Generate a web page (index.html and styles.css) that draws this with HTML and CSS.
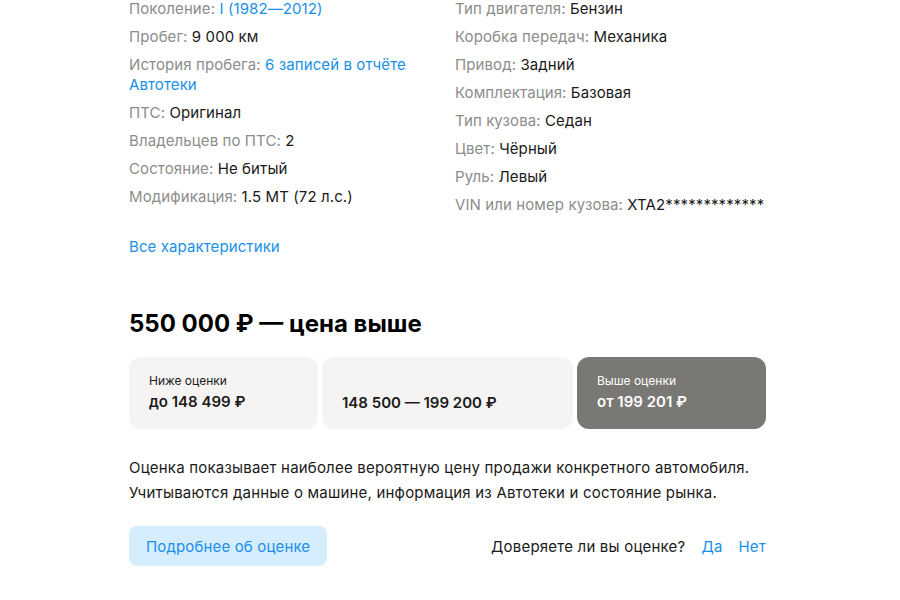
FILE: index.html
```html
<!DOCTYPE html>
<html lang="ru">
<head>
    <meta charset="UTF-8">
    <meta name="viewport" content="width=device-width, initial-scale=1.0">
    <title>Характеристики и оценка</title>
    <link rel="stylesheet" href="styles.css">
</head>
<body>
    <div class="container">
        <div class="params">
            <ul class="param-list">
                <li><span class="label">Поколение: </span><a class="link" href="#">I (1982—2012)</a></li>
                <li><span class="label">Пробег: </span>9 000 км</li>
                <li><span class="label">История пробега: </span><a class="link" href="#">6 записей в отчёте Автотеки</a></li>
                <li><span class="label">ПТС: </span>Оригинал</li>
                <li><span class="label">Владельцев по ПТС: </span>2</li>
                <li><span class="label">Состояние: </span>Не битый</li>
                <li><span class="label">Модификация: </span>1.5 MT (72 л.с.)</li>
            </ul>
            <ul class="param-list param-list-right">
                <li><span class="label">Тип двигателя: </span>Бензин</li>
                <li><span class="label">Коробка передач: </span>Механика</li>
                <li><span class="label">Привод: </span>Задний</li>
                <li><span class="label">Комплектация: </span>Базовая</li>
                <li><span class="label">Тип кузова: </span>Седан</li>
                <li><span class="label">Цвет: </span>Чёрный</li>
                <li><span class="label">Руль: </span>Левый</li>
                <li><span class="label">VIN или номер кузова: </span>XTA2*************</li>
            </ul>
        </div>
        <a class="link all-params" href="#">Все характеристики</a>

        <h2 class="price-title">550 000 ₽ — цена выше</h2>
        <div class="ranges">
            <div class="range">
                <div class="range-label">Ниже оценки</div>
                <div class="range-value">до 148 499 ₽</div>
            </div>
            <div class="range range-wide">
                <div class="range-value">148 500 — 199 200 ₽</div>
            </div>
            <div class="range range-active">
                <div class="range-label">Выше оценки</div>
                <div class="range-value">от 199 201 ₽</div>
            </div>
        </div>

        <p class="note">Оценка показывает наиболее вероятную цену продажи конкретного автомобиля. Учитываются данные о машине, информация из Автотеки и состояние рынка.</p>

        <div class="footer">
            <button class="button">Подробнее об оценке</button>
            <div class="trust">
                <span>Доверяете ли вы оценке?</span>
                <a class="link" href="#">Да</a>
                <a class="link" href="#">Нет</a>
            </div>
        </div>
    </div>
</body>
</html>
```

FILE: styles.css
```css
body {
    margin: 0;
    font-family: Inter, "Noto Sans", Arial, sans-serif;
    color: #1a1a1a;
    background: #fff;
}
.container {
    width: 637px;
    margin: -1px 0 0 129px;
}
.params {
    display: grid;
    grid-template-columns: 302px 1fr;
    column-gap: 24px;
}
.param-list {
    list-style: none;
    margin: 0;
    padding: 0;
}
.param-list li {
    font-size: 15px;
    line-height: 20px;
    letter-spacing: 0.1px;
    margin-bottom: 8px;
}
.param-list-right li {
    white-space: nowrap;
}
.label {
    color: #8c8c8c;
}
.link {
    color: #1a8fea;
    text-decoration: none;
}
.all-params {
    display: inline-block;
    margin-top: 14px;
    font-size: 15px;
    line-height: 20px;
    letter-spacing: 0.1px;
}
.price-title {
    margin: 51px 0 17px;
    font-size: 24px;
    line-height: 32px;
    font-weight: 700;
    color: #000;
}
.ranges {
    display: flex;
    gap: 4px;
}
.range {
    flex: 0 0 189px;
    height: 72px;
    box-sizing: border-box;
    padding: 0 20px;
    border-radius: 12px;
    background: #f5f4f2;
    display: flex;
    flex-direction: column;
    justify-content: center;
}
.range-wide {
    flex: 1;
}
.range-active {
    background: #7a7874;
    color: #fff;
}
.range-label {
    font-size: 12px;
    line-height: 16px;
}
.range-value {
    margin-top: 2px;
    font-size: 15px;
    line-height: 22px;
    font-weight: 600;
}
.range-wide .range-value {
    margin-top: 20px;
}
.note {
    margin: 26px 0 0;
    font-size: 15px;
    line-height: 25px;
    letter-spacing: 0.2px;
}
.footer {
    margin-top: 21px;
    display: flex;
    justify-content: space-between;
    align-items: center;
}
.button {
    font-family: inherit;
    font-size: 15px;
    letter-spacing: 0.15px;
    height: 40px;
    padding: 0 17px;
    border: none;
    border-radius: 8px;
    background: #d6edfd;
    color: #1a8fea;
    cursor: pointer;
}
.trust {
    display: flex;
    gap: 16px;
    font-size: 15px;
    letter-spacing: 0.2px;
}
```
